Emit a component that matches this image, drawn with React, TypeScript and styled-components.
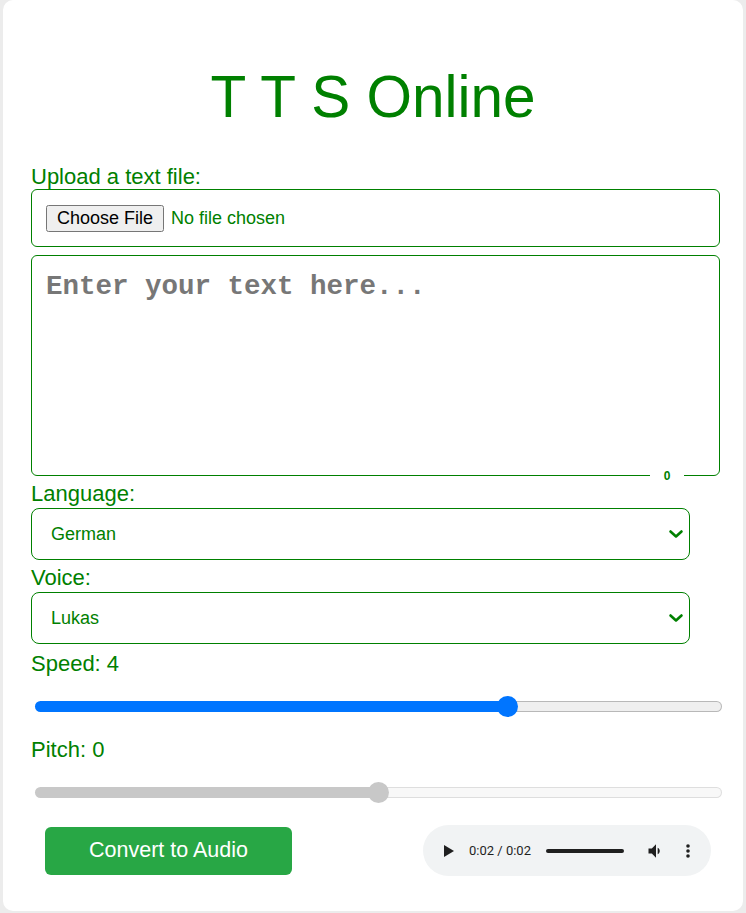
import { createGlobalStyle, styled } from "styled-components";

const GlobalStyle = createGlobalStyle`
  html, body {
    margin: 0;
    padding: 0;
    background: #ececec;
  }
  body {
    font-family: "Liberation Sans", Arial, sans-serif;
  }
  * {
    box-sizing: border-box;
  }
`;

const Card = styled.div`
  display: flow-root;
  margin: 0 3px;
  width: 740px;
  background: #fff;
  border-radius: 10px;
  padding: 0 0 35px 28px;
  color: green;
`;

const Title = styled.h1`
  margin: 63px 0 35px;
  padding-right: 28px;
  font-size: 58.5px;
  line-height: 67px;
  font-weight: 400;
  text-align: center;
  color: green;
`;

const Label = styled.label<{ $top?: number }>`
  display: block;
  margin-top: ${(p) => p.$top ?? 0}px;
  font-size: 22px;
  line-height: 24px;
  color: green;
`;

const FileInput = styled.input`
  display: block;
  width: 689px;
  height: 58px;
  padding: 15px 14px;
  border: 1px solid green;
  border-radius: 6px;
  font-family: "Liberation Sans", Arial, sans-serif;
  font-size: 18px;
  color: green;
  background: #fff;
  &::file-selector-button {
    padding: 1px 9px;
    margin-right: 7px;
    font-size: 18px;
  }
`;

const TextWrap = styled.div`
  position: relative;
  width: 689px;
  margin-top: 8px;
`;

const TextArea = styled.textarea`
  display: block;
  width: 100%;
  height: 221px;
  padding: 15px 14px;
  border: 1px solid green;
  border-radius: 6px;
  resize: none;
  font-family: "Liberation Mono", "Courier New", monospace;
  font-weight: 700;
  font-size: 27.5px;
  color: #333;
  &::placeholder {
    color: #777;
  }
`;

const Counter = styled.span`
  position: absolute;
  right: 36px;
  bottom: -8px;
  width: 34px;
  line-height: 16px;
  text-align: center;
  background: #fff;
  font-size: 12px;
  font-weight: 700;
  color: green;
`;

const SelectWrap = styled.div`
  position: relative;
  width: 659px;
  margin-top: 2px;
`;

const Select = styled.select`
  display: block;
  width: 100%;
  height: 52px;
  padding: 0 19px;
  border: 1px solid green;
  border-radius: 8px;
  appearance: none;
  background: #fff;
  font-family: "Liberation Sans", Arial, sans-serif;
  font-size: 18px;
  color: green;
`;

const Chevron = styled.svg`
  position: absolute;
  right: 6px;
  top: 50%;
  transform: translateY(-50%);
  pointer-events: none;
`;

const Track = styled.div<{ $top: number }>`
  position: relative;
  display: flex;
  width: 687px;
  height: 11px;
  margin: ${(p) => p.$top}px 0 0 4px;
`;

const Fill = styled.div<{ $color: string }>`
  height: 11px;
  border-radius: 6px 0 0 6px;
  background: ${(p) => p.$color};
`;

const Rest = styled.div<{ $bg: string; $border: string }>`
  flex: 1;
  height: 11px;
  border: 1px solid ${(p) => p.$border};
  border-left: none;
  border-radius: 0 6px 6px 0;
  background: ${(p) => p.$bg};
`;

const Thumb = styled.div<{ $color: string }>`
  position: absolute;
  top: -5px;
  width: 21px;
  height: 21px;
  border-radius: 50%;
  background: ${(p) => p.$color};
`;

const BottomRow = styled.div`
  display: flex;
  align-items: center;
  justify-content: space-between;
  width: 694px;
  margin-top: 27px;
  padding: 0 14px;
`;

const ConvertButton = styled.button`
  width: 247px;
  height: 48px;
  border: none;
  border-radius: 6px;
  background: #28a745;
  color: #fff;
  font-family: "Liberation Sans", Arial, sans-serif;
  font-size: 21.5px;
`;

const Player = styled.div`
  display: flex;
  align-items: center;
  width: 288px;
  height: 51px;
  padding: 0 0 0 20px;
  border-radius: 26px;
  background: #f1f3f4;
  color: #1f1f1f;
`;

const Time = styled.span`
  margin-left: 14px;
  font-family: Roboto, "Liberation Sans", sans-serif;
  font-size: 13px;
`;

const Progress = styled.div`
  width: 78px;
  height: 4px;
  margin-left: 15px;
  border-radius: 2px;
  background: #1f1f1f;
`;

const IconSlot = styled.span<{ $left: number }>`
  display: flex;
  margin-left: ${(p) => p.$left}px;
`;

function RangeSlider({
  value,
  min,
  max,
  top,
  disabled,
}: {
  value: number;
  min: number;
  max: number;
  top: number;
  disabled?: boolean;
}) {
  const frac = (value - min) / (max - min);
  const center = 20.5 + frac * 645;
  const fillColor = disabled ? "#c8c8c8" : "#0075ff";
  return (
    <Track $top={top}>
      <Fill $color={fillColor} style={{ width: center }} />
      <Rest
        $bg={disabled ? "#f8f8f8" : "#efefef"}
        $border={disabled ? "#dedede" : "#b8b8b8"}
      />
      <Thumb $color={fillColor} style={{ left: center - 10.5 }} />
    </Track>
  );
}

function ChevronIcon() {
  return (
    <Chevron width="16" height="10" viewBox="0 0 16 10">
      <path
        d="M2.5 2.5 L8 7.5 L13.5 2.5"
        fill="none"
        stroke="green"
        strokeWidth="2.6"
        strokeLinecap="round"
        strokeLinejoin="round"
      />
    </Chevron>
  );
}

export default function App() {
  return (
    <>
      <GlobalStyle />
      <Card>
        <Title>T T S Online</Title>
        <Label>Upload a text file:</Label>
        <FileInput type="file" accept=".txt" />
        <TextWrap>
          <TextArea placeholder="Enter your text here..." />
          <Counter>0</Counter>
        </TextWrap>

        <Label $top={6}>Language:</Label>
        <SelectWrap>
          <Select defaultValue="de">
            <option value="de">German</option>
          </Select>
          <ChevronIcon />
        </SelectWrap>

        <Label $top={6}>Voice:</Label>
        <SelectWrap>
          <Select defaultValue="lukas">
            <option value="lukas">Lukas</option>
          </Select>
          <ChevronIcon />
        </SelectWrap>

        <Label $top={8}>Speed: 4</Label>
        <RangeSlider value={4} min={-10} max={10} top={25} />

        <Label $top={26}>Pitch: 0</Label>
        <RangeSlider value={0} min={-10} max={10} top={25} disabled />

        <BottomRow>
          <ConvertButton>Convert to Audio</ConvertButton>
          <Player>
            <svg width="12" height="14" viewBox="0 0 12 14">
              <path d="M1 1 L11 7 L1 13 Z" fill="#1f1f1f" />
            </svg>
            <Time>0:02 / 0:02</Time>
            <Progress />
            <IconSlot $left={22}>
              <svg width="20" height="20" viewBox="0 0 24 24">
                <path
                  d="M3 9v6h4l5 5V4L7 9H3zm13.5 3c0-1.77-1.02-3.29-2.5-4.03v8.05c1.48-.73 2.5-2.25 2.5-4.02z"
                  fill="#1f1f1f"
                />
              </svg>
            </IconSlot>
            <IconSlot $left={20}>
              <svg width="4" height="16" viewBox="0 0 4 16">
                <circle cx="2" cy="3" r="1.8" fill="#1f1f1f" />
                <circle cx="2" cy="8" r="1.8" fill="#1f1f1f" />
                <circle cx="2" cy="13" r="1.8" fill="#1f1f1f" />
              </svg>
            </IconSlot>
          </Player>
        </BottomRow>
      </Card>
    </>
  );
}
